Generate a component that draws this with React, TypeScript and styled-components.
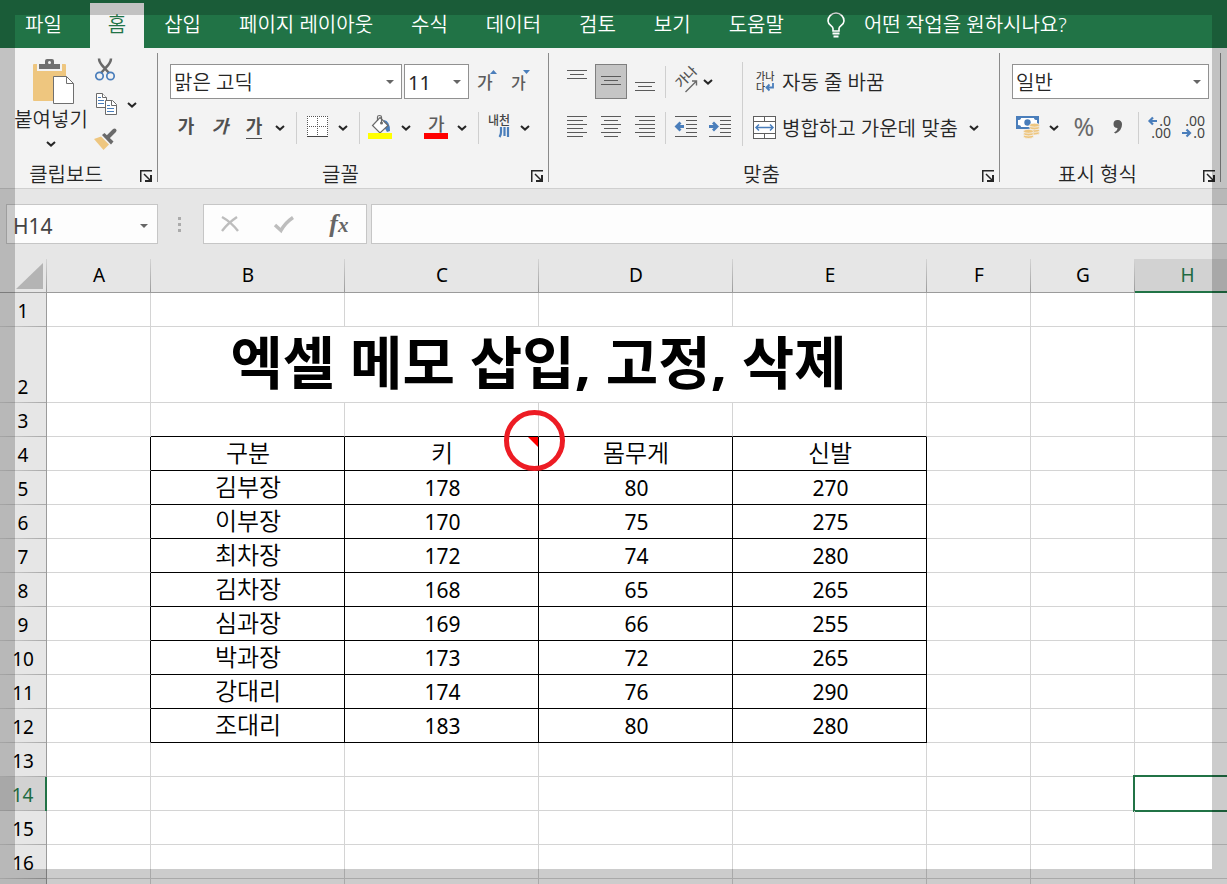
import React from 'react';
import styled, { createGlobalStyle, css } from 'styled-components';

const GREEN = '#217346';
const INK = '#262626';
const GRAY = '#6a6a6a';
const BLUE = '#4a7ebb';
const TAN = '#eec67f';
const SANS = '"Noto Sans", "Noto Sans CJK KR", sans-serif';

const GlobalStyle = createGlobalStyle`
  *, *::before, *::after { box-sizing: border-box; }
  body { margin: 0; background: #fff; font-family: ${SANS}; color: ${INK}; }
  button, input, select { font: inherit; color: inherit; }
  svg { flex: none; overflow: visible; }
`;

const Page = styled.div`
  position: relative;
  display: flex;
  flex-direction: column;
  height: 100vh;
  overflow: hidden;
  font-size: 20px;
  font-weight: 350;
  line-height: 28px;
`;

const Frame = styled.div`
  position: absolute;
  inset: 0;
  z-index: 5;
  border: 15px solid rgba(0, 0, 0, 0.2);
  pointer-events: none;
`;

/* Tab strip */

const TabBar = styled.nav`
  flex: none;
  display: flex;
  height: 48px;
  padding: 3px 0 0 6px;
  background: ${GREEN};
  white-space: nowrap;
`;

const Tab = styled.button<{ $active?: boolean; $file?: boolean }>`
  flex: none;
  padding: 0 19px 1px;
  border: 0;
  background: transparent;
  color: #fff;
  ${(p) => p.$file && css`margin-right: 9px;`}
  ${(p) => p.$active && css`
    margin-right: 1px;
    padding: 0 18px 1px;
    background: #f3f3f3;
    color: ${GREEN};
  `}
`;

const TellMe = styled.button`
  display: flex;
  align-items: center;
  gap: 19px;
  margin-left: 21px;
  padding: 0 3px 1px;
  border: 0;
  background: transparent;
  color: #fff;
`;

/* Ribbon */

const Ribbon = styled.div`
  flex: none;
  display: flex;
  height: 141px;
  background: #f3f3f3;
  border-bottom: 1px solid #cfcfcf;
  white-space: nowrap;
`;

const Group = styled.section<{ $width: number }>`
  flex: none;
  display: grid;
  grid-template-rows: 1fr 28px;
  width: ${(p) => p.$width}px;
`;

const GroupDivider = styled.div`
  flex: none;
  width: 1px;
  margin: 5px 0 6px;
  background: #8a8a8a;
`;

const GroupFooter = styled.footer`
  display: flex;
  span { flex: 1; padding-top: 1px; text-align: center; }
`;

const Launcher = styled.button`
  display: flex;
  align-items: center;
  width: 25px;
  padding: 4px 0 0 8px;
  border: 0;
  background: transparent;
`;

const GroupBody = styled.div<{ $start?: number; $top?: number }>`
  display: flex;
  align-items: flex-start;
  padding: ${(p) => p.$top ?? 16}px 0 0 ${(p) => p.$start ?? 12}px;
`;

const Rows = styled.div<{ $gap?: number }>`
  display: flex;
  flex-direction: column;
  gap: ${(p) => p.$gap ?? 11}px;
`;

const Row = styled.div<{ $gap?: number }>`
  display: flex;
  align-items: center;
  height: 35px;
  gap: ${(p) => p.$gap ?? 4}px;
`;

const Cluster = styled.div<{ $start?: number; $end?: number; $gap?: number }>`
  display: flex;
  align-items: center;
  gap: ${(p) => p.$gap ?? 6}px;
  padding: 0 ${(p) => p.$end ?? 0}px 0 ${(p) => p.$start ?? 0}px;
`;

const Split = styled.div`
  display: flex;
`;

const IconButton = styled.button<{ $width?: number; $on?: boolean }>`
  display: flex;
  align-items: center;
  justify-content: center;
  width: ${(p) => p.$width ?? 28}px;
  height: 35px;
  padding: 0;
  border: 1px solid ${(p) => (p.$on ? '#7f7f7f' : 'transparent')};
  background: ${(p) => (p.$on ? '#c5c5c5' : 'transparent')};
`;

const Glyph = styled.span<{ $italic?: boolean; $under?: boolean }>`
  height: 22px;
  color: #505050;
  font-size: 18px;
  font-weight: 700;
  line-height: 18px;
  font-style: ${(p) => (p.$italic ? 'italic' : 'normal')};
  border-bottom: 1px solid ${(p) => (p.$under ? '#505050' : 'transparent')};
`;

const Percent = styled.span`
  padding-bottom: 3px;
  color: ${GRAY};
  font-size: 25px;
  font-weight: 400;
`;

const Separator = styled.div`
  width: 1px;
  height: 32px;
  margin-right: 2px;
  background: #cfcfcf;
`;

const TallSeparator = styled.div`
  width: 1px;
  height: 84px;
  margin: -2px 7px 0 8px;
  background: #cfcfcf;
`;

const PasteButton = styled.button`
  display: flex;
  flex-direction: column;
  align-items: center;
  gap: 1px;
  width: 74px;
  margin-right: 4px;
  padding: 7px 0 0;
  border: 0;
  background: transparent;
`;

const PasteArrow = styled.span`
  display: flex;
  align-items: center;
  height: 18px;
`;

const TextButton = styled.button`
  display: flex;
  align-items: center;
  gap: 6px;
  padding: 0 0 0 3px;
  border: 0;
  background: transparent;
  span { padding-top: 2px; }
`;

const Combo = styled.div<{ $width: number }>`
  display: grid;
  align-items: center;
  width: ${(p) => p.$width}px;
  height: 35px;
  border: 1px solid #919191;
  background: #fff;
  > * { grid-area: 1 / 1; }
  > svg { justify-self: end; margin-right: 7px; pointer-events: none; }
`;

const Select = styled.select<{ $number?: boolean }>`
  width: 100%;
  height: 33px;
  padding: 2px 0 0 3px;
  border: 0;
  background: transparent;
  appearance: none;
  ${(p) => p.$number && css`font-weight: 400;`}
`;

/* Formula bar */

const FormulaBar = styled.div`
  flex: none;
  display: flex;
  align-items: center;
  height: 70px;
  padding-left: 6px;
  background: #e6e6e6;
`;

const NameBox = styled.div`
  display: flex;
  align-items: center;
  width: 152px;
  height: 40px;
  padding-right: 9px;
  border: 1px solid #c6c6c6;
  background: #fdfdfd;
`;

const NameInput = styled.input`
  flex: 1;
  min-width: 0;
  padding: 3px 0 0 6px;
  border: 0;
  background: transparent;
  color: #444;
  font-size: 21px;
  font-weight: 400;
`;

const PlainButton = styled.button`
  padding: 0;
  border: 0;
  background: transparent;
  line-height: 0;
`;

const Grip = styled.div`
  display: grid;
  gap: 3px;
  margin: 0 22px 0 20px;
  i { width: 3px; height: 3px; background: #ababab; }
`;

const FormulaTools = styled.div`
  display: flex;
  align-items: center;
  justify-content: space-around;
  width: 164px;
  height: 40px;
  margin-right: 4px;
  border: 1px solid #c6c6c6;
  background: #fdfdfd;
`;

const FxButton = styled(PlainButton)`
  color: #666;
  font: italic 700 26px/34px "Liberation Serif", serif;
  small { font-size: 21px; }
`;

const FormulaInput = styled.input`
  flex: 1;
  min-width: 0;
  height: 40px;
  border: 1px solid #c6c6c6;
  border-right: 0;
  background: #fdfdfd;
`;

/* Sheet */

const Sheet = styled.main`
  flex: 1;
  min-height: 0;
  overflow: hidden;
`;

const Grid = styled.table`
  table-layout: fixed;
  width: 1239px;
  border-collapse: separate;
  border-spacing: 0;
  color: #000;
  text-align: center;
`;

const Corner = styled.td`
  padding: 0 4px 3px 16px;
  vertical-align: bottom;
  line-height: 0;
  border-bottom: 1px solid #9b9b9b;
  background: linear-gradient(#d4d4d4, #9b9b9b) right / 1px 100% no-repeat, #e6e6e6;
`;

const ColumnHead = styled.th<{ $active: boolean }>`
  height: 34px;
  padding: 0 0 2px;
  font-size: 19px;
  font-weight: 400;
  line-height: 30px;
  border-bottom: 1px solid #9b9b9b;
  background: linear-gradient(#d4d4d4, #9b9b9b) right / 1px 100% no-repeat, #e6e6e6;
  ${(p) => p.$active && css`
    padding: 0 0 0 1px;
    color: #1e6b41;
    border-bottom: 2px solid ${GREEN};
    background: #d2d2d2;
  `}
`;

const RowHead = styled.th<{ $active: boolean }>`
  padding: 0 0 2px;
  vertical-align: bottom;
  font-size: 19px;
  font-weight: 400;
  line-height: 28px;
  border-right: 1px solid #9b9b9b;
  background: linear-gradient(90deg, #d0d0d0, #a8a8a8) bottom / 100% 1px no-repeat, #e6e6e6;
  ${(p) => p.$active && css`
    color: #1e6b41;
    border-right: 2px solid ${GREEN};
    background: linear-gradient(90deg, #c0c0c0, #a8a8a8) bottom / 100% 1px no-repeat, #d2d2d2;
  `}
`;

const SheetRow = styled.tr<{ $tall: boolean }>`
  height: ${(p) => (p.$tall ? 76 : 34)}px;
`;

const Cell = styled.td<{ $right: boolean; $bottom: boolean; $number?: boolean }>`
  position: relative;
  padding: ${(p) => (p.$number ? '1px 0 0 2px' : '0 0 2px 1px')};
  font-size: ${(p) => (p.$number ? 21 : 24)}px;
  font-weight: ${(p) => (p.$number ? 400 : 350)};
  line-height: 31px;
  border-right: 1px solid ${(p) => (p.$right ? '#000' : '#d4d4d4')};
  border-bottom: 1px solid ${(p) => (p.$bottom ? '#000' : '#d4d4d4')};
`;

const TitleCell = styled(Cell)`
  padding: 0 0 5px;
  font-size: 57px;
  font-weight: 700;
  line-height: 70px;
`;

const Selection = styled.div`
  position: absolute;
  inset: -2px;
  border: 2px solid ${GREEN};
`;

const NoteMark = styled.svg`
  position: absolute;
  top: 0;
  right: 0;
`;

const RedRing = styled.svg`
  position: absolute;
  top: -27px;
  right: -27px;
  z-index: 2;
`;

/* Icons */

const Chevron = () => (
  <svg width="10" height="6" viewBox="0 0 10 6" fill="none" stroke="#262626" strokeWidth="2">
    <path d="M1 1l4 3.6L9 1" />
  </svg>
);

const Caret = () => (
  <svg width="8" height="4" viewBox="0 0 8 4"><path d="M0 0h8L4 4z" fill="#666" /></svg>
);

const More = ({ label, width = 24 }: { label: string; width?: number }) => (
  <IconButton $width={width} aria-label={label}><Chevron /></IconButton>
);

const BulbIcon = () => (
  <svg width="18" height="25" viewBox="0 0 18 25" fill="none" stroke="#fff" strokeWidth="1.6">
    <path d="M6 18v-2.500C6 13 1 12 1 8a8 8 0 0 1 16 0c0 4-5 5-5 7.500V18z" />
    <path d="M5.500 20.500h7M6.500 23.500h5" strokeWidth="1.800" />
  </svg>
);

const PasteIcon = () => (
  <svg width="48" height="46" viewBox="-6 0 48 46">
    <rect x="0" y="5" width="33" height="37" rx="1" fill={TAN} />
    <path d="M5 5h7V2q0-2 2-2h5q2 0 2 2v3h7v6H5z" fill="#f3f3f3" stroke="#f3f3f3" strokeWidth="2" />
    <path d="M6 5h6V2q0-2 2-2h5q2 0 2 2v3h6v5H6z" fill="#6f6f6f" />
    <circle cx="16.500" cy="3.500" r="1.500" fill="#f3f3f3" />
    <path d="M20.500 17.500h13l7 7v20h-20z" fill="#fff" stroke="#6f6f6f" />
    <path d="M33.500 17.500v7h7" fill="none" stroke="#6f6f6f" />
  </svg>
);

const CutIcon = () => (
  <svg width="22" height="23" viewBox="0 0 22 23" fill="none">
    <path d="M4 .5c0 3 2 6 5 9l5 5.500M16 .5c0 3-2 6-5 9l-5 5.500" stroke={GRAY} strokeWidth="2.500" />
    <circle cx="4.500" cy="18" r="3.700" stroke={BLUE} strokeWidth="1.700" />
    <circle cx="15.500" cy="18" r="3.700" stroke={BLUE} strokeWidth="1.700" />
  </svg>
);

const CopyIcon = () => (
  <svg width="21" height="23" viewBox="0 0 21 23" fill="#fff" stroke={GRAY}>
    <path d="M.5.5h6l4 4v10H.5z" />
    <path d="M6.500.5v4h4" />
    <path d="M2 4.500h3M2 7.500h6M2 10.500h6" stroke={BLUE} />
    <path d="M9.500 7.500h7l4 4v10h-11z" />
    <path d="M15.500 7.500v5h5" />
    <path d="M11 12.500h3M11 15.500h7M11 18.500h7" stroke={BLUE} />
  </svg>
);

const BrushIcon = () => (
  <svg width="24" height="21" viewBox="0 0 24 21">
    <path d="M0 10l7-2.500 8 8L9.500 21z" fill={TAN} />
    <path d="M8 6l2.500-2 9 8.500-2.500 3z" fill={GRAY} />
    <path d="M14 8l6.500-6.500" stroke={GRAY} strokeWidth="4" strokeLinecap="round" />
  </svg>
);

const SizeIcon = ({ up }: { up?: boolean }) => (
  <svg width="20" height="23" viewBox="0 0 20 23">
    <text x="0" y="19" fontSize={up ? 17 : 16} fontWeight="500" fill="#5c5c5c">가</text>
    <path d={up ? 'M13 4h7l-3.500-4z' : 'M12 0h7l-3.500 4z'} fill={BLUE} />
  </svg>
);

const BordersIcon = () => (
  <svg width="21" height="23" viewBox="0 0 21 23" fill="none" stroke="#555" shapeRendering="crispEdges">
    <rect x="0" y="0" width="21" height="20" fill="#fff" stroke="none" />
    <path d="M0 .5h21M0 10.500h21M.5 0v20M10.500 0v20M20.500 0v20" strokeDasharray="1 1" />
    <path d="M0 20.500h21" stroke="#444" />
  </svg>
);

const FillIcon = () => (
  <svg width="24" height="25" viewBox="0 0 24 25">
    <path d="M16 5q6 1 6 11l-3 1-4-7z" fill={BLUE} />
    <path d="M12 2.500l8 8-8 7.500-7.500-7.500z" fill="#fff" stroke={GRAY} strokeWidth="1.200" />
    <path d="M9.500 6V2q0-1.500 2-1.500t2 1.500v6" fill="none" stroke={GRAY} strokeWidth="1.200" />
    <circle cx="13.500" cy="8" r="1.500" fill={GRAY} />
    <rect y="18" width="24" height="6" fill="#ff0" />
  </svg>
);

const FontColorIcon = () => (
  <svg width="24" height="25" viewBox="0 0 24 25">
    <text x="4" y="16" fontSize="18" fontWeight="500" fill="#5c5c5c">가</text>
    <rect y="18" width="24" height="6" fill="#f00" />
  </svg>
);

const PhoneticIcon = () => (
  <svg width="22" height="25" viewBox="0 0 22 25">
    <text x="0" y="10" fontSize="12" fontWeight="500" fill="#444">내천</text>
    <path d="M13 12v5q0 3-1.500 5M16.500 12v9M20 12v10" fill="none" stroke={BLUE} strokeWidth="2.200" />
  </svg>
);

const LinesIcon = ({ rows, top = 0 }: { rows: [number, number][]; top?: number }) => (
  <svg width="20" height="23" viewBox="0 0 20 23" stroke="#5a5a5a" shapeRendering="crispEdges">
    {rows.map(([from, to], i) => (
      <path key={i} d={`M${from} ${top + i * 4 + 0.5}H${to}`} />
    ))}
  </svg>
);

const shortRows: [number, number][] = [[0, 20], [3, 17], [0, 20]];
const leftRows: [number, number][] = [[0, 20], [0, 16], [0, 20], [0, 16], [0, 20], [0, 16]];
const centerRows: [number, number][] = [[0, 20], [3, 17], [0, 20], [3, 17], [0, 20], [3, 17]];
const rightRows: [number, number][] = [[0, 20], [4, 20], [0, 20], [4, 20], [0, 20], [4, 20]];

const OrientationIcon = () => (
  <svg width="22" height="23" viewBox="0 0 22 23">
    <text transform="rotate(-45 6 16)" x="4" y="18" fontSize="13" fontWeight="500" fill="#555">가나</text>
    <path d="M10.500 22L21.500 11M17 11h4.500v4.500" fill="none" stroke={GRAY} strokeWidth="1.400" />
  </svg>
);

const IndentIcon = ({ out }: { out?: boolean }) => (
  <svg width="22" height="23" viewBox="0 0 22 23">
    <path
      d="M0 .5h22M11 4.500h11M11 8.500h11M11 12.500h11M11 16.500h11M0 20.500h22"
      stroke="#5a5a5a"
      shapeRendering="crispEdges"
    />
    <path d={out ? 'M9 10.500H2M5.500 6.500L1.500 10.500l4 4' : 'M0 10.500h7M4 6.500l4 4-4 4'} fill="none" stroke={BLUE} strokeWidth="2.800" />
  </svg>
);

const WrapIcon = () => (
  <svg width="23" height="22" viewBox="0 0 23 22">
    <text x="3" y="9" fontSize="10" fontWeight="500" fill="#444">가나</text>
    <text x="3" y="20" fontSize="10" fontWeight="500" fill="#444">다</text>
    <path d="M20 12v4.500h-6M16.500 13.500l-3 3 3 3" fill="none" stroke={BLUE} strokeWidth="1.800" />
  </svg>
);

const MergeIcon = () => (
  <svg width="23" height="23" viewBox="0 0 23 23" fill="#fff" stroke="#5f5f5f">
    <rect x=".5" y=".5" width="22" height="22" />
    <path d="M.5 5.500h22M.5 17.500h22M11.500.5v5M11.500 17.500v5" />
    <path d="M3 11.500h17M6 8.500l-3 3 3 3M17 8.500l3 3-3 3" fill="none" stroke={BLUE} strokeWidth="1.500" />
  </svg>
);

const Coins = ({ x, y, n }: { x: number; y: number; n: number }) => (
  <g fill={TAN} stroke="#f3f3f3" strokeWidth=".8">
    {Array.from({ length: n }, (_, i) => (
      <ellipse key={i} cx={x} cy={y - i * 2.6} rx="5" ry="2" />
    ))}
  </g>
);

const MoneyIcon = () => (
  <svg width="24" height="23" viewBox="0 0 24 23">
    <rect width="23" height="13" fill={BLUE} />
    <path d="M5 2h13q0 2 3 2v5q-3 0-3 2H5q0-2-3-2V4q3 0 3-2z" fill="#fff" />
    <circle cx="11.500" cy="6.500" r="3.200" fill={BLUE} />
    <Coins x={18.5} y={17} n={4} />
    <Coins x={12.5} y={20.5} n={3} />
  </svg>
);

const CommaIcon = () => (
  <svg width="10" height="16" viewBox="0 0 10 16">
    <path d="M4.500 0a4 4 0 0 1 4.500 4.500q0 6-6.500 9l-1.500-1q3.500-2 3.500-4.500A4 4 0 0 1 4.500 0z" fill="#5a5a5a" />
  </svg>
);

const DecimalIcon = ({ more }: { more?: boolean }) => (
  <svg width="24" height="27" viewBox="0 0 24 27" fontWeight="400">
    <text x="24" y="12" textAnchor="end" fontSize="14" fill="#444">{more ? '.0' : '.00'}</text>
    <text x="24" y="24" textAnchor="end" fontSize="14" fill="#444">{more ? '.00' : '.0'}</text>
    <path
      d={more ? 'M10 7H2.500M6 3.500L2.500 7 6 10.500' : 'M1 19h8M5.500 15.500L9 19l-3.500 3.500'}
      fill="none"
      stroke={BLUE}
      strokeWidth="2.200"
    />
  </svg>
);

const LauncherIcon = () => (
  <svg width="12" height="12" viewBox="0 0 12 12" fill="none" stroke={INK}>
    <path d="M.750 12V.750H12" strokeWidth="1.500" />
    <path d="M4 4l6.500 6.500" strokeWidth="1.500" />
    <path d="M11 5v6H5" strokeWidth="2" />
  </svg>
);

const CancelIcon = () => (
  <svg width="18" height="16" viewBox="0 0 18 16" fill="none" stroke="#bdbdbd" strokeWidth="2.400">
    <path d="M1 1q9 5 16 14M16 1Q7 7 1 15" />
  </svg>
);

const EnterIcon = () => (
  <svg width="20" height="17" viewBox="0 0 20 17" fill="none" stroke="#bdbdbd" strokeWidth="3.400">
    <path d="M1 9l6 5.500Q11 7 19 1.500" />
  </svg>
);

/* Data */

const tabs = ['파일', '홈', '삽입', '페이지 레이아웃', '수식', '데이터', '검토', '보기', '도움말'];
const columns = ['A', 'B', 'C', 'D', 'E', 'F', 'G', 'H'];
const widths = [47, 104, 194, 194, 194, 194, 104, 104, 104];
const firstDataRow = 4;
const records = [
  ['구분', '키', '몸무게', '신발'],
  ['김부장', '178', '80', '270'],
  ['이부장', '170', '75', '275'],
  ['최차장', '172', '74', '280'],
  ['김차장', '168', '65', '265'],
  ['심과장', '169', '66', '255'],
  ['박과장', '173', '72', '265'],
  ['강대리', '174', '76', '290'],
  ['조대리', '183', '80', '280'],
];
const lastDataRow = firstDataRow + records.length - 1;

const Footer = ({ name }: { name: string }) => (
  <GroupFooter>
    <span>{name}</span>
    <Launcher aria-label={`${name} 설정`}><LauncherIcon /></Launcher>
  </GroupFooter>
);

function renderCell(row: number, col: number) {
  const inRows = row >= firstDataRow && row <= lastDataRow;
  const inTable = inRows && col >= 1 && col <= 4;
  const text = inTable ? records[row - firstDataRow][col - 1] : '';
  return (
    <Cell
      key={col}
      $right={inRows && col <= 4}
      $bottom={col >= 1 && col <= 4 && row >= firstDataRow - 1 && row <= lastDataRow}
      $number={/^\d/.test(text)}
    >
      {text}
      {row === 4 && col === 2 && (
        <>
          <NoteMark width="10" height="10" viewBox="0 0 10 10"><path d="M0 0h10v10z" fill="#f00" /></NoteMark>
          <RedRing width="61" height="61" viewBox="0 0 61 61">
            <circle cx="30.500" cy="30.500" r="28" fill="none" stroke="#ed1c24" strokeWidth="5" />
          </RedRing>
        </>
      )}
      {row === 14 && col === 7 && <Selection />}
    </Cell>
  );
}

export default function App() {
  return (
    <Page>
      <GlobalStyle />
      <TabBar>
        {tabs.map((t, i) => (
          <Tab key={t} $file={i === 0} $active={i === 1}>{t}</Tab>
        ))}
        <TellMe><BulbIcon />어떤 작업을 원하시나요?</TellMe>
      </TabBar>

      <Ribbon>
        <Group $width={157}>
          <GroupBody $start={14} $top={4}>
            <PasteButton>
              <PasteIcon />
              붙여넣기
              <PasteArrow><Chevron /></PasteArrow>
            </PasteButton>
            <Rows $gap={0}>
              <Row><IconButton aria-label="잘라내기"><CutIcon /></IconButton></Row>
              <Row $gap={0}>
                <IconButton aria-label="복사"><CopyIcon /></IconButton>
                <More label="복사 옵션" />
              </Row>
              <Row><IconButton aria-label="서식 복사"><BrushIcon /></IconButton></Row>
            </Rows>
          </GroupBody>
          <Footer name="클립보드" />
        </Group>
        <GroupDivider />

        <Group $width={390}>
          <GroupBody>
            <Rows>
              <Row $gap={2}>
                <Combo $width={232}>
                  <Select aria-label="글꼴 이름"><option>맑은 고딕</option></Select>
                  <Caret />
                </Combo>
                <Combo $width={65}>
                  <Select $number aria-label="글꼴 크기"><option>11</option></Select>
                  <Caret />
                </Combo>
                <Cluster $start={2}>
                  <IconButton aria-label="글꼴 크기 크게"><SizeIcon up /></IconButton>
                  <IconButton aria-label="글꼴 크기 작게"><SizeIcon /></IconButton>
                </Cluster>
              </Row>
              <Row>
                <Cluster $start={2}>
                  <IconButton aria-label="굵게"><Glyph>가</Glyph></IconButton>
                  <IconButton aria-label="기울임꼴"><Glyph $italic>가</Glyph></IconButton>
                  <Split>
                    <IconButton aria-label="밑줄"><Glyph $under>가</Glyph></IconButton>
                    <More label="밑줄 옵션" />
                  </Split>
                </Cluster>
                <Separator />
                <Split>
                  <IconButton aria-label="테두리"><BordersIcon /></IconButton>
                  <More label="테두리 옵션" />
                </Split>
                <Separator />
                <Split>
                  <IconButton aria-label="채우기 색"><FillIcon /></IconButton>
                  <More label="채우기 색 옵션" />
                </Split>
                <Split>
                  <IconButton aria-label="글꼴 색"><FontColorIcon /></IconButton>
                  <More label="글꼴 색 옵션" />
                </Split>
                <Separator />
                <Split>
                  <IconButton aria-label="윗주"><PhoneticIcon /></IconButton>
                  <More label="윗주 옵션" />
                </Split>
              </Row>
            </Rows>
          </GroupBody>
          <Footer name="글꼴" />
        </Group>
        <GroupDivider />

        <Group $width={450}>
          <GroupBody>
            <Rows>
              <Row>
                <Cluster $gap={2}>
                  <IconButton $width={32} aria-label="위쪽 맞춤"><LinesIcon rows={shortRows} /></IconButton>
                  <IconButton $width={32} $on aria-label="가운데 맞춤"><LinesIcon rows={shortRows} top={6} /></IconButton>
                  <IconButton $width={32} aria-label="아래쪽 맞춤"><LinesIcon rows={shortRows} top={12} /></IconButton>
                </Cluster>
                <Separator />
                <Split>
                  <IconButton aria-label="방향"><OrientationIcon /></IconButton>
                  <More label="방향 옵션" width={16} />
                </Split>
              </Row>
              <Row>
                <Cluster $gap={2}>
                  <IconButton $width={32} aria-label="왼쪽 맞춤"><LinesIcon rows={leftRows} /></IconButton>
                  <IconButton $width={32} aria-label="텍스트 가운데 맞춤"><LinesIcon rows={centerRows} /></IconButton>
                  <IconButton $width={32} aria-label="오른쪽 맞춤"><LinesIcon rows={rightRows} /></IconButton>
                </Cluster>
                <Separator />
                <Cluster>
                  <IconButton aria-label="내어쓰기"><IndentIcon out /></IconButton>
                  <IconButton aria-label="들여쓰기"><IndentIcon /></IconButton>
                </Cluster>
              </Row>
            </Rows>
            <TallSeparator />
            <Rows>
              <Row><TextButton><WrapIcon /><span>자동 줄 바꿈</span></TextButton></Row>
              <Row>
                <TextButton><MergeIcon /><span>병합하고 가운데 맞춤</span></TextButton>
                <More label="병합 옵션" />
              </Row>
            </Rows>
          </GroupBody>
          <Footer name="맞춤" />
        </Group>
        <GroupDivider />

        <Group $width={220}>
          <GroupBody>
            <Rows>
              <Row>
                <Combo $width={197}>
                  <Select aria-label="표시 형식"><option>일반</option></Select>
                  <Caret />
                </Combo>
              </Row>
              <Row>
                <Cluster $start={2} $gap={0}>
                  <IconButton aria-label="회계 표시 형식"><MoneyIcon /></IconButton>
                  <More label="회계 옵션" />
                </Cluster>
                <Cluster $end={2}>
                  <IconButton aria-label="백분율 스타일"><Percent>%</Percent></IconButton>
                  <IconButton aria-label="쉼표 스타일"><CommaIcon /></IconButton>
                </Cluster>
                <Separator />
                <Cluster>
                  <IconButton aria-label="자릿수 늘림"><DecimalIcon more /></IconButton>
                  <IconButton aria-label="자릿수 줄임"><DecimalIcon /></IconButton>
                </Cluster>
              </Row>
            </Rows>
          </GroupBody>
          <Footer name="표시 형식" />
        </Group>
        <GroupDivider />
      </Ribbon>

      <FormulaBar>
        <NameBox>
          <NameInput aria-label="이름 상자" defaultValue="H14" />
          <PlainButton aria-label="이름 목록"><Caret /></PlainButton>
        </NameBox>
        <Grip><i /><i /><i /></Grip>
        <FormulaTools>
          <PlainButton aria-label="취소"><CancelIcon /></PlainButton>
          <PlainButton aria-label="입력"><EnterIcon /></PlainButton>
          <FxButton aria-label="함수 삽입">f<small>x</small></FxButton>
        </FormulaTools>
        <FormulaInput aria-label="수식 입력줄" />
      </FormulaBar>

      <Sheet>
        <Grid>
          <colgroup>{widths.map((w, i) => <col key={i} width={w} />)}</colgroup>
          <thead>
            <tr>
              <Corner>
                <svg width="27" height="26" viewBox="0 0 27 26"><path d="M27 0v26H0z" fill="#b4b4b4" /></svg>
              </Corner>
              {columns.map((c) => <ColumnHead key={c} scope="col" $active={c === 'H'}>{c}</ColumnHead>)}
            </tr>
          </thead>
          <tbody>
            {Array.from({ length: 17 }, (_, i) => i + 1).map((row) => (
              <SheetRow key={row} $tall={row === 2}>
                <RowHead scope="row" $active={row === 14}>{row}</RowHead>
                {row === 2 ? (
                  <>
                    {renderCell(row, 0)}
                    <TitleCell colSpan={4} $right={false} $bottom={false}>엑셀 메모 삽입, 고정, 삭제</TitleCell>
                    {[5, 6, 7].map((col) => renderCell(row, col))}
                  </>
                ) : (
                  columns.map((_, col) => renderCell(row, col))
                )}
              </SheetRow>
            ))}
          </tbody>
        </Grid>
      </Sheet>
      <Frame />
    </Page>
  );
}
